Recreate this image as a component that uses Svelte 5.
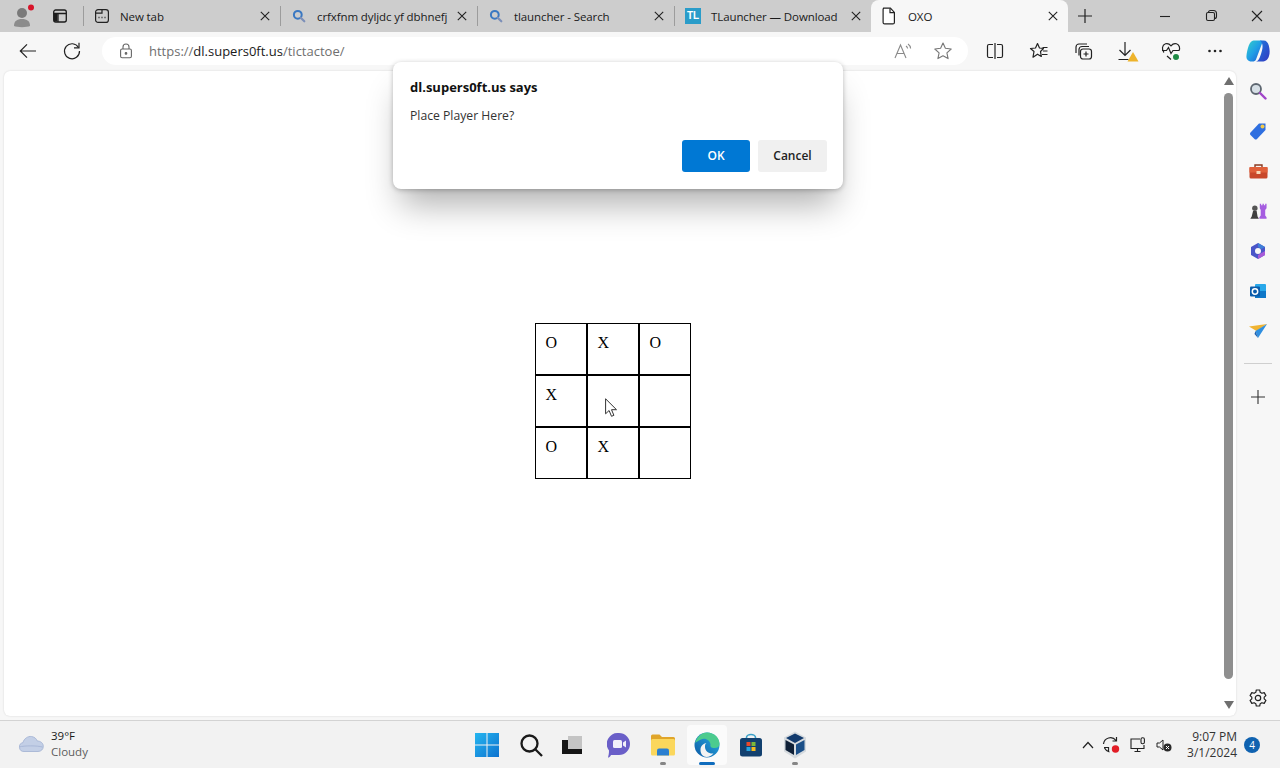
<script>
  const tabs = [
    { title: "New tab", icon: "newtab" },
    { title: "crfxfnm dyljdc yf dbhnefj", icon: "search" },
    { title: "tlauncher - Search", icon: "search" },
    { title: "TLauncher — Download", icon: "tl" }
  ];
  const board = ["O", "X", "O", "X", "", "", "O", "X", ""];
</script>

<div class="screen">
  <!-- tab strip -->
  <header class="tabstrip">
    <div class="profile">
      <svg width="24" height="24" viewBox="0 0 24 24"><circle cx="10" cy="9" r="5" fill="#7a7a7a"/><path d="M2 22c0-5 3-7 8-7s8 2 8 7c-3 1.500-13 1.500-16 0z" fill="#8c8c8c"/><circle cx="19" cy="3.500" r="3" fill="#d8142a"/></svg>
    </div>
    <div class="strip-btn">
      <svg width="16" height="16" viewBox="0 0 16 16" fill="none" stroke="#1c1c1c" stroke-width="1.300"><rect x="1.700" y="2" width="12.600" height="12" rx="2"/><path d="M1.700 5.500h12.600M6 5.500V14" /><rect x="2" y="6" width="3.500" height="7.500" fill="#1c1c1c" stroke="none"/></svg>
    </div>
    {#each tabs as tab}
      <div class="tab">
        <span class="tab-icon">
          {#if tab.icon === "newtab"}
            <svg width="16" height="16" viewBox="0 0 16 16" fill="none" stroke="#222" stroke-width="1.200"><rect x="1.600" y="1.600" width="12.800" height="12.800" rx="2.500"/><path d="M1.600 5.200h6.400V1.800"/><path d="M4.500 9.500h1M7.500 9.500h1M10.500 9.500h1" stroke-width="1.500"/></svg>
          {:else if tab.icon === "search"}
            <svg width="16" height="16" viewBox="0 0 16 16" fill="none"><circle cx="6.800" cy="6.800" r="3.900" stroke="#3a78c2" stroke-width="2"/><path d="M9.700 9.700l3.600 3.600" stroke="#7c8fb8" stroke-width="2.200" stroke-linecap="round"/></svg>
          {:else}
            <span class="tl">TL</span>
          {/if}
        </span>
        <span class="tab-title">{tab.title}</span>
        <svg class="tab-x" width="10" height="10" viewBox="0 0 10 10" stroke="#222" stroke-width="1.100"><path d="M.8.800l8.400 8.400M9.200.800L.8 9.200"/></svg>
      </div>
    {/each}
    <div class="tab active">
      <span class="tab-icon">
        <svg width="16" height="18" viewBox="0 0 16 18" fill="#fff" stroke="#222" stroke-width="1.200"><path d="M2.600 1.200h6.800l4 4.200v10a1.500 1.500 0 0 1-1.500 1.500H3.600a1.500 1.500 0 0 1-1.500-1.500V2.200z"/><path d="M9 1.400v4.300h4.300" fill="none"/></svg>
      </span>
      <span class="tab-title">OXO</span>
      <svg class="tab-x" width="10" height="10" viewBox="0 0 10 10" stroke="#222" stroke-width="1.100"><path d="M.8.800l8.400 8.400M9.200.800L.8 9.200"/></svg>
    </div>
    <div class="new-tab">
      <svg width="16" height="16" viewBox="0 0 16 16" stroke="#222" stroke-width="1.200"><path d="M8 1v14M1 8h14"/></svg>
    </div>
    <div class="window-btns">
      <svg width="46" height="16" viewBox="0 0 46 16" stroke="#222" stroke-width="1.100" fill="none"><path d="M18 8.500h10"/></svg>
      <svg width="46" height="16" viewBox="0 0 46 16" stroke="#222" stroke-width="1.100" fill="none"><rect x="18.500" y="4.500" width="8" height="8" rx="1.500"/><path d="M20.500 4.500c0-1.500 1-2 2-2h3c1.500 0 3 1 3 3v3c0 1-.5 2-2 2"/></svg>
      <svg width="46" height="16" viewBox="0 0 46 16" stroke="#222" stroke-width="1.100" fill="none"><path d="M18 3l10 10M28 3L18 13"/></svg>
    </div>
  </header>

  <!-- toolbar -->
  <nav class="toolbar">
    <button class="tool" aria-label="Back">
      <svg width="20" height="20" viewBox="0 0 20 20" fill="none" stroke="#222" stroke-width="1.200"><path d="M18 10H2.500M9 3.300L2.300 10 9 16.700"/></svg>
    </button>
    <button class="tool" aria-label="Reload">
      <svg width="20" height="20" viewBox="0 0 20 20" fill="none" stroke="#222" stroke-width="1.200"><path d="M16.500 6.500A7.500 7.500 0 1 0 17.500 10"/><path d="M17 1.800v5h-5"/></svg>
    </button>
    <div class="address">
      <svg class="lock" width="16" height="16" viewBox="0 0 16 16" fill="none" stroke="#666" stroke-width="1.100"><rect x="2.600" y="6" width="10.800" height="8.800" rx="1.500"/><path d="M5 6V4a3 3 0 0 1 6 0v2"/><circle cx="8" cy="10.400" r=".8" fill="#666"/></svg>
      <span class="url"><span class="dim">https://</span>dl.supers0ft.us<span class="dim">/tictactoe/</span></span>
      <span class="addr-icons">
        <svg width="20" height="20" viewBox="0 0 20 20" fill="none" stroke="#8a8a8a" stroke-width="1.100"><path d="M2 17L7.500 4 13 17M4 12.500h7"/><path d="M13 5c1 .7 1.500 1.500 1.600 2.500M15 3c1.500 1 2.500 2.700 2.600 4.500"/></svg>
        <svg width="20" height="20" viewBox="0 0 20 20" fill="none" stroke="#777" stroke-width="1.100" stroke-linejoin="round"><path d="M10 2l2.400 5.300 5.800.7-4.300 3.900 1.200 5.700L10 14.800l-5.100 2.800 1.200-5.700L1.800 8l5.800-.7z"/></svg>
      </span>
    </div>
    <div class="tool-group">
      <button class="tool" aria-label="Split screen">
        <svg width="20" height="20" viewBox="0 0 20 20" fill="none" stroke="#222" stroke-width="1.200"><path d="M8 3.500H4a1.500 1.500 0 0 0-1.500 1.500v10A1.500 1.500 0 0 0 4 16.500h4M12 3.500h4A1.500 1.500 0 0 1 17.500 5v10a1.500 1.500 0 0 1-1.500 1.500h-4M10 2v16"/></svg>
      </button>
      <button class="tool" aria-label="Favorites">
        <svg width="20" height="20" viewBox="0 0 20 20" fill="none" stroke="#222" stroke-width="1.200" stroke-linejoin="round"><path d="M8.500 2.500l2 4.500 4 .5-3 3 .8 5-3.800-2.300-4.500 3 1-5.700L1.500 7.500l5-.5z"/><path d="M13.500 6.500h5M14 10h4.500M13 13.500h5.500"/></svg>
      </button>
      <button class="tool" aria-label="Collections">
        <svg width="20" height="20" viewBox="0 0 20 20" fill="none" stroke="#222" stroke-width="1.200"><path d="M14 3H6a3 3 0 0 0-3 3v6"/><path d="M16 5.500H9A3 3 0 0 0 6 8.500v6"/><rect x="7.500" y="8" width="11" height="10" rx="2.500"/><path d="M13 10.500v5M10.500 13h5"/></svg>
      </button>
      <button class="tool" aria-label="Downloads">
        <svg width="24" height="24" viewBox="0 0 24 24" fill="none" stroke="#222" stroke-width="1.200"><path d="M10 3v13M4.500 11L10 16.500 15.500 11M3.500 20.500h10"/><path d="M18 13l5.500 9.500h-11z" fill="#eeb32b" stroke="none"/></svg>
      </button>
      <button class="tool" aria-label="Browser essentials">
        <svg width="22" height="22" viewBox="0 0 22 22" fill="none" stroke="#222" stroke-width="1.200"><path d="M4 12.500C1.500 9.500 2 5 5.500 3.800c2-.6 4 .2 5.500 2 1.500-1.800 3.500-2.600 5.500-2 3 1 3.800 4.500 2.500 7M7 16l4 3.500"/><path d="M2 10.500h4.500l2-3 2.500 6 2-3h6"/><circle cx="16" cy="17" r="3.600" fill="#1e8a44" stroke="#f9f9f9"/></svg>
      </button>
      <button class="tool" aria-label="More">
        <svg width="16" height="4" viewBox="0 0 16 4" fill="#222"><circle cx="2.500" cy="2" r="1.300"/><circle cx="8" cy="2" r="1.300"/><circle cx="13.500" cy="2" r="1.300"/></svg>
      </button>
      <button class="tool copilot" aria-label="Copilot">
        <svg width="26" height="26" viewBox="0 0 26 26"><defs><linearGradient id="cpa" x1="0" y1="0" x2="1" y2="1"><stop offset="0" stop-color="#35d0c8"/><stop offset=".5" stop-color="#1f9fe6"/><stop offset="1" stop-color="#1f55d0"/></linearGradient><linearGradient id="cpb" x1="0" y1="0" x2="1" y2="1"><stop offset="0" stop-color="#1b7fe0"/><stop offset="1" stop-color="#3538c0"/></linearGradient></defs><path d="M8.500 2.500h7c1.800 0 2 1.500 1.500 3L11 21.500c-.6 1.500-1.800 2-3.500 2h-1C3 23.500 1 21 1.500 17.500 2.300 11 4.500 2.500 8.500 2.500z" fill="url(#cpa)"/><path d="M15 2.500h3.500c3 0 4.500 2 5.300 5 1 4 1.200 7.500.2 10.500-1.200 4-3.500 5.500-7 5.500h-6c2.500-.5 3.500-3 5-7.500s3-10-1-13.500z" fill="url(#cpb)"/></svg>
      </button>
    </div>
  </nav>

  <div class="workspace">
    <main class="page">
      <div class="content">
        <div class="board">
          {#each board as mark}
            <div class="cell">{mark}</div>
          {/each}
        </div>
      </div>
      <div class="scrollbar">
        <span class="arrow up"></span>
        <span class="thumb"></span>
        <span class="arrow down"></span>
      </div>
    </main>

    <aside class="sidebar">
      <svg class="side-icon" width="18" height="18" viewBox="0 0 18 18" fill="none"><circle cx="7" cy="7" r="5" fill="#d6dfe6" stroke="#5d6670" stroke-width="1.800"/><path d="M11 11l5.500 5.500" stroke="#a045c8" stroke-width="2.400" stroke-linecap="round"/></svg>
      <svg class="side-icon" width="18" height="18" viewBox="0 0 18 18"><path d="M10 1.500h6.500V8L8 17a2 2 0 0 1-2.500 0L1.500 13a2 2 0 0 1 0-2.500z" fill="#2f6fe0"/><circle cx="13.500" cy="4.500" r="2" fill="#f2c94c"/></svg>
      <svg class="side-icon" width="19" height="18" viewBox="0 0 19 18"><path d="M6 5V3h7v2" fill="none" stroke="#8a3a20" stroke-width="1.400"/><rect x=".5" y="5" width="18" height="11.500" rx="1.500" fill="#c8482a"/><rect x=".5" y="5" width="18" height="5.500" fill="#e0603a"/><rect x="7.500" y="9" width="4" height="3" fill="#f6d9b8"/></svg>
      <svg class="side-icon" width="20" height="20" viewBox="0 0 20 20"><path d="M12 2h1.500v1.500H15V2h1.500v1.500H18V2h1.500v5l-1.500 2v6l1.500 2v1.500h-8V17L13 15V9l-1-2z" fill="#a55de0"/><circle cx="6.500" cy="7" r="3" fill="#555"/><path d="M4.500 10h4l1 6 1.500 2.500H1.500L3 16z" fill="#3f3f3f"/></svg>
      <svg class="side-icon" width="18" height="18" viewBox="0 0 18 18"><path d="M9 1l7 4v8l-7 4-7-4V5z" fill="#4a55c8"/><path d="M9 1l7 4-3.500 2L9 5z" fill="#3f7fd8"/><path d="M16 9v4l-7 4v-4z" fill="#a85bd8"/><circle cx="9" cy="9" r="3" fill="#f7f7f7"/></svg>
      <svg class="side-icon" width="18" height="18" viewBox="0 0 18 18"><rect x="6" y="2" width="11" height="14" rx="1" fill="#28a8ea"/><rect x="6" y="9" width="11" height="7" fill="#0f78c8"/><rect x="1" y="4.500" width="10" height="10" rx="1" fill="#0a5cab"/><circle cx="6" cy="9.500" r="2.700" fill="none" stroke="#fff" stroke-width="1.500"/></svg>
      <svg class="side-icon" width="20" height="16" viewBox="0 0 20 16"><path d="M1 3.500L19 1 8.500 8z" fill="#f0b433"/><path d="M19 1L7.500 8 10 15z" fill="#2f8fe0"/><path d="M7.500 8L10 15 6.500 11z" fill="#1d5fae"/></svg>
      <div class="side-rule"></div>
      <svg class="side-plus" width="14" height="14" viewBox="0 0 14 14" stroke="#333" stroke-width="1.100"><path d="M7 0v14M0 7h14"/></svg>
      <svg class="side-gear" width="20" height="20" viewBox="0 0 20 20" fill="none" stroke="#222" stroke-width="1.200" stroke-linejoin="round"><path d="M8.300 2h3.400l.5 2.300 1.700 1 2.300-.7 1.700 3-1.700 1.500v1.800l1.700 1.500-1.700 3-2.300-.7-1.700 1-.5 2.300H8.300l-.5-2.300-1.700-1-2.300.7-1.700-3 1.700-1.500V9.100L2.100 7.600l1.700-3 2.300.7 1.700-1z"/><circle cx="10" cy="10" r="2.700"/></svg>
    </aside>
  </div>

  <!-- windows taskbar -->
  <footer class="taskbar">
    <div class="weather">
      <svg width="26" height="18" viewBox="0 0 26 18"><path d="M6 16.500a4.500 4.500 0 0 1-1-8.900C6 3.500 10 1 13.500 1.500c3 .4 5 2.300 5.800 4.500 3.500 0 6 2.300 6 5.300 0 3-2.200 5.200-5.300 5.200z" fill="#c3cfe6" stroke="#9fb0d2" stroke-width=".8"/><path d="M1.500 12c4-1.500 18-1.500 23 0" fill="none" stroke="#a9b8d8" stroke-width="1"/></svg>
      <div class="weather-text">
        <span class="temp">39°F</span>
        <span class="cond">Cloudy</span>
      </div>
    </div>

    <div class="task-icons">
      <div class="task">
        <svg width="24" height="24" viewBox="0 0 24 24"><defs><linearGradient id="win" x1="0" y1="0" x2="1" y2="1"><stop offset="0" stop-color="#25b6f0"/><stop offset="1" stop-color="#0e72cf"/></linearGradient></defs><path d="M0 0h11.500v11.500H0zM12.500 0H24v11.500H12.500zM0 12.500h11.500V24H0zM12.500 12.500H24V24H12.500z" fill="url(#win)"/></svg>
      </div>
      <div class="task">
        <svg width="24" height="24" viewBox="0 0 24 24" fill="none" stroke="#1a1a1a" stroke-width="2.300"><circle cx="10.500" cy="10.500" r="8"/><path d="M16.500 16.500L23 23"/></svg>
      </div>
      <div class="task task-view">
        <svg width="20" height="18" viewBox="0 0 20 18"><rect x="6" y="0" width="14" height="13" fill="#c4c4c4"/><path d="M0 4h6v9h14v5H0z" fill="#151515"/></svg>
      </div>
      <div class="task">
        <svg width="24" height="26" viewBox="0 0 24 26"><path d="M12 1a11 11 0 0 1 0 22H4c-1 2-2 2.500-3 2.500.5-2 1-3.500 1-7A11 11 0 0 1 12 1z" fill="#6a5fc8"/><rect x="6" y="8" width="9" height="8" rx="1.500" fill="#f1f0fa"/><path d="M16 10.500l3-2v7l-3-2z" fill="#f1f0fa"/></svg>
      </div>
      <div class="task has-dot">
        <svg width="26" height="22" viewBox="0 0 26 22"><path d="M1 2a1.500 1.500 0 0 1 1.500-1.500h7L12 3h11.500A1.500 1.500 0 0 1 25 4.500V8H1z" fill="#e0a52a"/><rect x="1" y="5" width="24" height="16.500" rx="1.500" fill="#fbd75c"/><path d="M7 21.500v-5a2 2 0 0 1 2-2h8a2 2 0 0 1 2 2v5z" fill="#2a7fd0"/></svg>
        <span class="dot"></span>
      </div>
      <div class="task focused">
        <svg width="26" height="26" viewBox="0 0 26 26"><defs><linearGradient id="edge" x1="0" y1="1" x2="1" y2="0"><stop offset="0" stop-color="#0c59a4"/><stop offset="1" stop-color="#2ab2e8"/></linearGradient></defs><circle cx="13" cy="13" r="12.500" fill="url(#edge)"/><path d="M1 11C3 3.500 9 .5 13 .5c7 0 12.500 5 12.500 11.500 0 2.500-2 4-5 4-3.500 0-4.500-1.500-4-3.500C16 8 11 5.500 7 7.500 4 9 2 10 1 11z" fill="#4ccb8e"/><path d="M11 15c0 4 4 7 8.500 6.500-2 2-4 3.500-7 3.500-3.500 0-6-3-6-7 0-4 2.500-6.500 6-7-1.500 1-1.500 2.500-1.500 4z" fill="#f3f3f3"/></svg>
        <span class="bar"></span>
      </div>
      <div class="task">
        <svg width="24" height="24" viewBox="0 0 24 24"><path d="M7.500 6V4.500a4.500 3 0 0 1 9 0V6" fill="none" stroke="#39a0c8" stroke-width="1.600"/><rect x="1" y="5" width="22" height="18.500" rx="2.500" fill="#12406f"/><rect x="7.500" y="9" width="4" height="4" fill="#e8492b"/><rect x="12.500" y="9" width="4" height="4" fill="#7cb83a"/><rect x="7.500" y="14" width="4" height="4" fill="#27a4e0"/><rect x="12.500" y="14" width="4" height="4" fill="#f5bb1f"/></svg>
      </div>
      <div class="task has-dot">
        <svg width="24" height="28" viewBox="0 0 24 28"><path d="M12 .5L23 6.500v14L12 27.500 1 20.500v-14z" fill="#d5dade"/><path d="M12 2.500l9 4.500-9 5-9-5z" fill="#123a6d"/><path d="M2.500 9l8.500 4.500V24l-8.500-5z" fill="#0f2036"/><path d="M21.500 9L13 13.500V24l8.500-5z" fill="#1b4f88"/></svg>
        <span class="dot"></span>
      </div>
    </div>

    <div class="tray">
      <svg class="chevron" width="12" height="8" viewBox="0 0 12 8" fill="none" stroke="#222" stroke-width="1.200"><path d="M1 7l5-5.500L11 7"/></svg>
      <svg width="18" height="18" viewBox="0 0 18 18" fill="none" stroke="#222" stroke-width="1.200"><path d="M1.500 8A7 7 0 0 1 14 4.500M14.500 1v4h-4M2 11.500h4.500v4M2.500 12c1 2 3 3.500 5 4"/><circle cx="13.500" cy="13" r="3.700" fill="#e21d26" stroke="none"/></svg>
      <svg width="16" height="16" viewBox="0 0 16 16" fill="none" stroke="#222" stroke-width="1.100"><path d="M10 2H1v9.500h13V8M4.500 14.500h6M7.500 11.500v3"/><rect x="11" y=".7" width="3.400" height="6" rx="1.500"/></svg>
      <svg width="16" height="16" viewBox="0 0 16 16" fill="none" stroke="#222" stroke-width="1"><path d="M1 6h2.500L7 3v10L3.500 10H1z"/><circle cx="11.500" cy="10.500" r="4" fill="#2a2a2a" stroke="none"/><path d="M10 9l3 3M13 9l-3 3" stroke="#fff"/></svg>
      <div class="clock">
        <span>9:07 PM</span>
        <span>3/1/2024</span>
      </div>
      <span class="badge">4</span>
    </div>
  </footer>

  <!-- overlays -->
  <div class="dialog" role="dialog">
    <h1>dl.supers0ft.us says</h1>
    <p>Place Player Here?</p>
    <div class="dialog-actions">
      <button class="ok">OK</button>
      <button class="cancel">Cancel</button>
    </div>
  </div>

  <svg class="cursor" width="13" height="20" viewBox="0 0 13 20"><path d="M.6.800v15l3.500-3.300 2.400 5.800 2.400-1-2.400-5.600h5z" fill="#fff" stroke="#333" stroke-width="1"/></svg>
</div>

<style>
  :global(body) {
    margin: 0;
    overflow: hidden;
  }
  .screen {
    position: relative;
    width: 1280px;
    height: 768px;
    overflow: hidden;
    display: flex;
    flex-direction: column;
    background: #f7f7f7;
    font-family: "Open Sans", "Noto Sans", sans-serif;
    color: #1a1a1a;
  }

  /* ── Tab strip ── */
  .tabstrip {
    height: 32px;
    flex: none;
    display: flex;
    align-items: center;
    background: #cdcdcd;
  }
  .profile {
    width: 44px;
    box-sizing: border-box;
    padding-left: 4px;
    display: flex;
    justify-content: center;
  }
  .strip-btn {
    width: 39px;
    box-sizing: border-box;
    padding-right: 8px;
    display: flex;
    justify-content: center;
  }
  .tab {
    position: relative;
    width: 197px;
    height: 32px;
    box-sizing: border-box;
    padding: 0 10px 0 11px;
    display: flex;
    align-items: center;
    font-size: 11.5px;
    letter-spacing: -0.1px;
  }
  .tab::before {
    content: "";
    position: absolute;
    left: 0;
    top: 6px;
    width: 1px;
    height: 20px;
    background: #9c9c9c;
  }
  .tab-icon {
    width: 16px;
    height: 18px;
    flex: none;
    display: flex;
    align-items: center;
    justify-content: center;
    margin-right: 10px;
  }
  .tl {
    width: 16px;
    height: 16px;
    background: #2a9cc9;
    color: #fff;
    font: bold 10px/16px "Liberation Sans", sans-serif;
    letter-spacing: 0;
    text-align: center;
  }
  .tab-title {
    flex: 1;
    min-width: 0;
    white-space: nowrap;
  }
  .tab-x {
    flex: none;
    margin-left: 4px;
  }
  .tab.active {
    background: #f7f7f7;
    border-radius: 8px 8px 0 0;
    padding-left: 10px;
  }
  .tab.active .tab-icon {
    margin-right: 11px;
  }
  .tab.active::before {
    display: none;
  }
  .new-tab {
    width: 34px;
    display: flex;
    justify-content: center;
  }
  .window-btns {
    margin-left: auto;
    display: flex;
  }

  /* ── Toolbar ── */
  .toolbar {
    height: 38px;
    flex: none;
    display: flex;
    align-items: center;
    padding-left: 6px;
    background: #f7f7f7;
  }
  .tool {
    width: 44px;
    height: 32px;
    padding: 0;
    border: 0;
    background: none;
    display: flex;
    align-items: center;
    justify-content: center;
  }
  .copilot {
    width: 42px;
  }
  .address {
    width: 866px;
    height: 28px;
    margin-left: 8px;
    border-radius: 14px;
    background: #fff;
    display: flex;
    align-items: center;
    box-sizing: border-box;
    padding: 0 15px 0 16px;
    font-size: 13px;
  }
  .lock {
    margin-right: 15px;
  }
  .url {
    flex: 1;
    color: #1a1a1a;
  }
  .dim {
    color: #6f6f6f;
  }
  .addr-icons {
    display: flex;
    gap: 20px;
  }
  .tool-group {
    display: flex;
    margin-left: 5px;
  }

  /* ── Page ── */
  .workspace {
    flex: 1;
    min-height: 0;
    display: flex;
    align-items: stretch;
  }
  .page {
    width: 1232px;
    margin: 1px 0 4px 4px;
    background: #fff;
    border-radius: 6px;
    box-shadow: 0 0 2px rgba(0, 0, 0, 0.15);
    display: flex;
  }
  .content {
    flex: 1;
    display: flex;
    justify-content: center;
    padding-top: 252px;
  }
  .board {
    width: 156px;
    height: 156px;
    box-sizing: border-box;
    padding: 1px;
    background: #000;
    display: grid;
    grid-template-columns: repeat(3, 50px);
    grid-template-rows: repeat(3, 50px);
    gap: 2px;
  }
  .cell {
    background: #fff;
    padding: 10px 10px 0;
    font: 16px/18px "Liberation Serif", serif;
    color: #000;
  }
  .scrollbar {
    width: 15px;
    display: flex;
    flex-direction: column;
    align-items: center;
  }
  .thumb {
    width: 9px;
    height: 586px;
    margin-top: 8px;
    background: #8f8f8f;
    border-radius: 5px;
  }
  .arrow {
    width: 0;
    height: 0;
    border-left: 5px solid transparent;
    border-right: 5px solid transparent;
  }
  .arrow.up {
    margin-top: 6px;
    border-bottom: 8px solid #6f6f6f;
  }
  .arrow.down {
    margin-top: 22px;
    border-top: 8px solid #6f6f6f;
  }

  /* ── Edge sidebar ── */
  .sidebar {
    flex: 1;
    display: flex;
    flex-direction: column;
    align-items: center;
    padding-top: 12px;
  }
  .side-icon {
    height: 18px;
    margin-bottom: 22px;
    flex: none;
  }
  .side-rule {
    width: 28px;
    height: 1px;
    background: #cfcfcf;
    margin-top: 1px;
  }
  .side-plus {
    margin-top: 26px;
  }
  .side-gear {
    margin-top: auto;
    margin-bottom: 12px;
  }

  /* ── Taskbar ── */
  .taskbar {
    height: 48px;
    flex: none;
    box-sizing: border-box;
    border-top: 1px solid #d3d3d3;
    background: #f2f2f2;
    display: grid;
    grid-template-columns: 1fr auto 1fr;
    align-items: center;
  }
  .weather {
    display: flex;
    align-items: center;
    gap: 7px;
    padding: 0 0 2px 18px;
    font-size: 11.5px;
    line-height: 16px;
  }
  .weather-text {
    display: flex;
    flex-direction: column;
  }
  .cond {
    color: #5d5d5d;
  }
  .task-icons {
    display: flex;
    gap: 4px;
    margin-left: 2px;
  }
  .task {
    position: relative;
    width: 40px;
    height: 40px;
    display: flex;
    align-items: center;
    justify-content: center;
    border-radius: 4px;
  }
  .task-view svg {
    margin-left: -6px;
  }
  .task.focused {
    background: #fbfbfb;
  }
  .dot {
    position: absolute;
    left: 17px;
    bottom: 0;
    width: 6px;
    height: 3px;
    border-radius: 2px;
    background: #858585;
  }
  .bar {
    position: absolute;
    left: 12px;
    bottom: 0;
    width: 16px;
    height: 3px;
    border-radius: 2px;
    background: #0f6cbd;
  }
  .tray {
    display: flex;
    align-items: center;
    justify-content: flex-end;
    padding-right: 20px;
    gap: 10px;
  }
  .chevron {
    margin-right: -2px;
  }
  .clock {
    display: flex;
    flex-direction: column;
    align-items: flex-end;
    font-size: 12px;
    line-height: 16px;
    margin: 0 -3px 0 5px;
    color: #333;
  }
  .badge {
    width: 16px;
    height: 16px;
    border-radius: 50%;
    background: #0f62b0;
    color: #fff;
    font-size: 10px;
    line-height: 16px;
    text-align: center;
  }

  /* ── JS confirm dialog ── */
  .dialog {
    position: absolute;
    left: 393px;
    top: 62px;
    width: 450px;
    height: 127px;
    box-sizing: border-box;
    padding: 15px 16px 17px 17px;
    background: #fff;
    border-radius: 8px;
    box-shadow:
      0 1px 5px rgba(0, 0, 0, 0.25),
      0 24px 32px -8px rgba(0, 0, 0, 0.3);
    display: flex;
    flex-direction: column;
  }
  .dialog h1 {
    margin: 0;
    font-size: 13px;
    line-height: 20px;
    font-weight: 700;
    color: #111;
  }
  .dialog p {
    margin: 9px 0 0;
    font-size: 12.2px;
    line-height: 20px;
    color: #333;
  }
  .dialog-actions {
    margin-top: auto;
    display: flex;
    justify-content: flex-end;
    gap: 8px;
  }
  .dialog button {
    height: 32px;
    border: 0;
    border-radius: 3px;
    font-family: inherit;
    font-size: 12px;
    font-weight: 600;
    padding: 0 0 2px;
  }
  .ok {
    width: 68px;
    background: #0078d4;
    color: #fff;
  }
  .cancel {
    width: 69px;
    background: #f0f0f0;
    color: #222;
  }
  .cursor {
    position: absolute;
    left: 605px;
    top: 398px;
  }
</style>
